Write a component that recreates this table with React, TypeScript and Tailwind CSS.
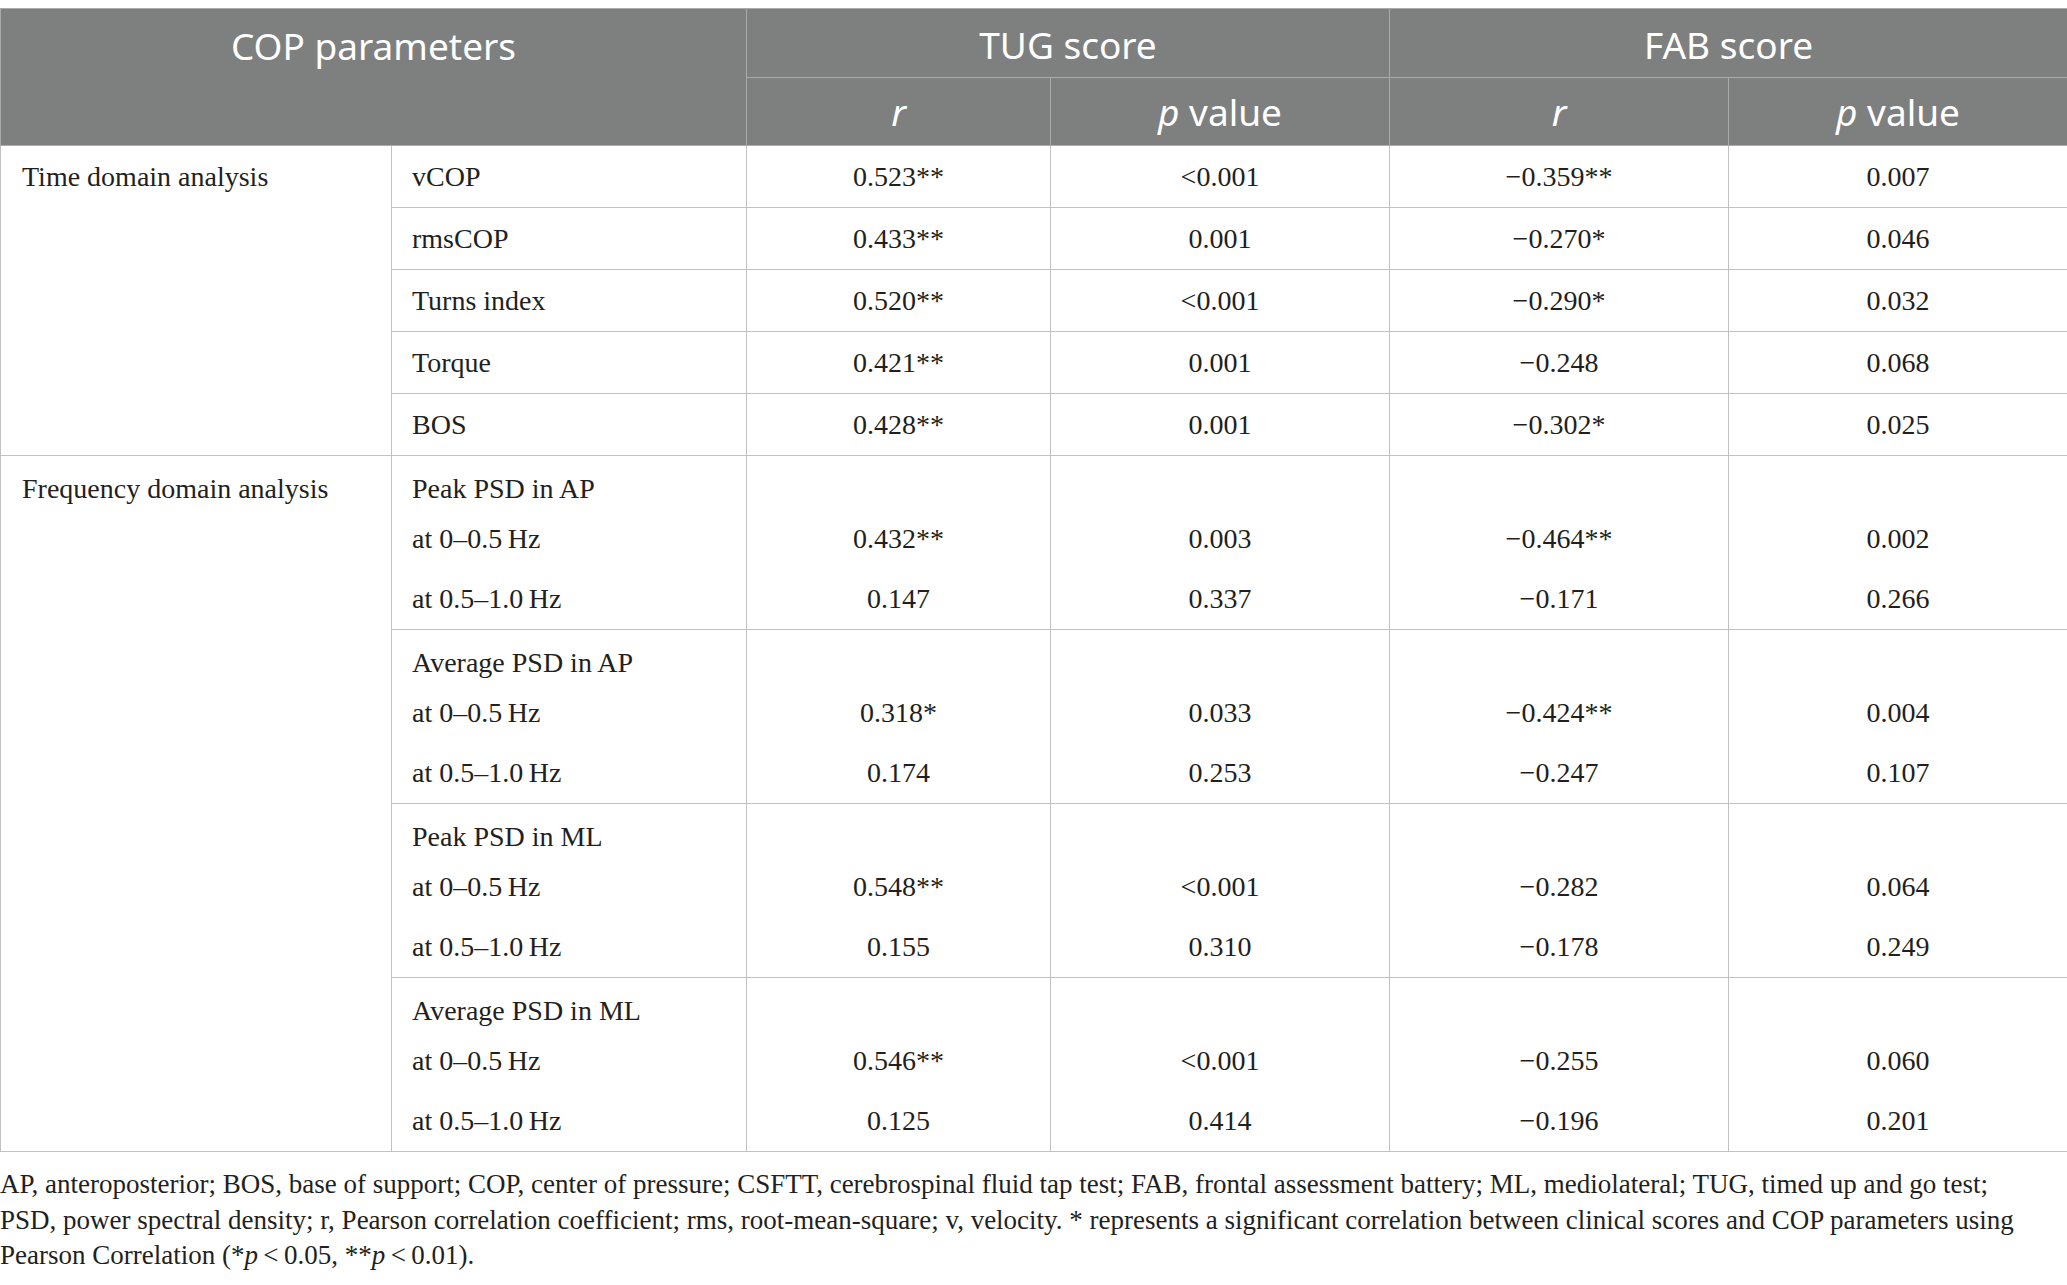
import React from 'react';

type Row = { label: string; tr: string; tp: string; fr: string; fp: string };
type Group = { title: string; rows: Row[] };

const timeRows: Row[] = [
  { label: 'vCOP', tr: '0.523**', tp: '<0.001', fr: '\u22120.359**', fp: '0.007' },
  { label: 'rmsCOP', tr: '0.433**', tp: '0.001', fr: '\u22120.270*', fp: '0.046' },
  { label: 'Turns index', tr: '0.520**', tp: '<0.001', fr: '\u22120.290*', fp: '0.032' },
  { label: 'Torque', tr: '0.421**', tp: '0.001', fr: '\u22120.248', fp: '0.068' },
  { label: 'BOS', tr: '0.428**', tp: '0.001', fr: '\u22120.302*', fp: '0.025' },
];

const freqGroups: Group[] = [
  {
    title: 'Peak PSD in AP',
    rows: [
      { label: 'at 0\u20130.5\u2009Hz', tr: '0.432**', tp: '0.003', fr: '\u22120.464**', fp: '0.002' },
      { label: 'at 0.5\u20131.0\u2009Hz', tr: '0.147', tp: '0.337', fr: '\u22120.171', fp: '0.266' },
    ],
  },
  {
    title: 'Average PSD in AP',
    rows: [
      { label: 'at 0\u20130.5\u2009Hz', tr: '0.318*', tp: '0.033', fr: '\u22120.424**', fp: '0.004' },
      { label: 'at 0.5\u20131.0\u2009Hz', tr: '0.174', tp: '0.253', fr: '\u22120.247', fp: '0.107' },
    ],
  },
  {
    title: 'Peak PSD in ML',
    rows: [
      { label: 'at 0\u20130.5\u2009Hz', tr: '0.548**', tp: '<0.001', fr: '\u22120.282', fp: '0.064' },
      { label: 'at 0.5\u20131.0\u2009Hz', tr: '0.155', tp: '0.310', fr: '\u22120.178', fp: '0.249' },
    ],
  },
  {
    title: 'Average PSD in ML',
    rows: [
      { label: 'at 0\u20130.5\u2009Hz', tr: '0.546**', tp: '<0.001', fr: '\u22120.255', fp: '0.060' },
      { label: 'at 0.5\u20131.0\u2009Hz', tr: '0.125', tp: '0.414', fr: '\u22120.196', fp: '0.201' },
    ],
  },
];

const serif = "font-['Liberation_Serif','Times_New_Roman',serif]";
// cell bases, vertical alignment added per cell
const td = 'border border-[#c2c2c2] text-center p-0';
const th = 'border border-[#a9aaa9] text-center align-middle font-normal p-0';

const App: React.FC = () => {
  return (
    <div className="w-[2067px] h-[1285px] bg-white pt-[8px] overflow-hidden">
      <table
        className={`w-[2067px] table-fixed border-collapse text-[28px] leading-[50px] text-[#231f20] ${serif}`}
      >
        <colgroup>
          <col className="w-[391px]" />
          <col className="w-[355px]" />
          <col className="w-[304px]" />
          <col className="w-[339px]" />
          <col className="w-[339px]" />
          <col className="w-[339px]" />
        </colgroup>
        <thead className="bg-[#7e807f] text-white text-[37px] font-['Noto_Sans','Open_Sans',sans-serif]">
          <tr className="h-[69px]">
            <th colSpan={2} rowSpan={2} className={`${th} !align-top pt-[12px] leading-[50px]`}>
              COP parameters
            </th>
            <th colSpan={2} className={`${th} pt-[4px]`}>TUG score</th>
            <th colSpan={2} className={`${th} pt-[4px]`}>FAB score</th>
          </tr>
          <tr className="h-[68px]">
            <th className={th}><i>r</i></th>
            <th className={th}><i>p</i> value</th>
            <th className={th}><i>r</i></th>
            <th className={th}><i>p</i> value</th>
          </tr>
        </thead>
        <tbody>
          {timeRows.map((r, i) => (
            <tr key={r.label} className="h-[62px]">
              {i === 0 && (
                <td rowSpan={timeRows.length} className={`${td} text-left align-top pl-[21px] pt-[6px]`}>
                  Time domain analysis
                </td>
              )}
              <td className={`${td} align-middle text-left pl-[20px]`}>{r.label}</td>
              <td className={`${td} align-middle`}>{r.tr}</td>
              <td className={`${td} align-middle`}>{r.tp}</td>
              <td className={`${td} align-middle`}>{r.fr}</td>
              <td className={`${td} align-middle`}>{r.fp}</td>
            </tr>
          ))}
          {freqGroups.map((g, gi) => (
            <React.Fragment key={g.title}>
              <tr className="h-[113px]">
                {gi === 0 && (
                  <td rowSpan={freqGroups.length * 2} className={`${td} text-left align-top pl-[21px] pt-[8px]`}>
                    Frequency domain analysis
                  </td>
                )}
                <td className={`${td} text-left align-top pl-[20px] pt-[8px] border-b-0`}>
                  <div>{g.title}</div>
                  <div>{g.rows[0].label}</div>
                </td>
                <td className={`${td} align-bottom pb-[5px] border-b-0`}>{g.rows[0].tr}</td>
                <td className={`${td} align-bottom pb-[5px] border-b-0`}>{g.rows[0].tp}</td>
                <td className={`${td} align-bottom pb-[5px] border-b-0`}>{g.rows[0].fr}</td>
                <td className={`${td} align-bottom pb-[5px] border-b-0`}>{g.rows[0].fp}</td>
              </tr>
              <tr className="h-[61px]">
                <td className={`${td} align-middle text-left pl-[20px] border-t-0`}>{g.rows[1].label}</td>
                <td className={`${td} align-middle border-t-0`}>{g.rows[1].tr}</td>
                <td className={`${td} align-middle border-t-0`}>{g.rows[1].tp}</td>
                <td className={`${td} align-middle border-t-0`}>{g.rows[1].fr}</td>
                <td className={`${td} align-middle border-t-0`}>{g.rows[1].fp}</td>
              </tr>
            </React.Fragment>
          ))}
        </tbody>
      </table>
      <p className={`mt-[15px] text-[27px] leading-[35.5px] text-[#231f20] ${serif}`}>
        AP, anteroposterior; BOS, base of support; COP, center of pressure; CSFTT, cerebrospinal fluid tap test; FAB,
        frontal assessment battery; ML, mediolateral; TUG, timed up and go test;
        <br />
        PSD, power spectral density; r, Pearson correlation coefficient; rms, root-mean-square; v, velocity. * represents
        a significant correlation between clinical scores and COP parameters using
        <br />
        Pearson Correlation (*<i>p</i>&#8201;&lt;&#8201;0.05, **<i>p</i>&#8201;&lt;&#8201;0.01).
      </p>
    </div>
  );
};

export default App;
